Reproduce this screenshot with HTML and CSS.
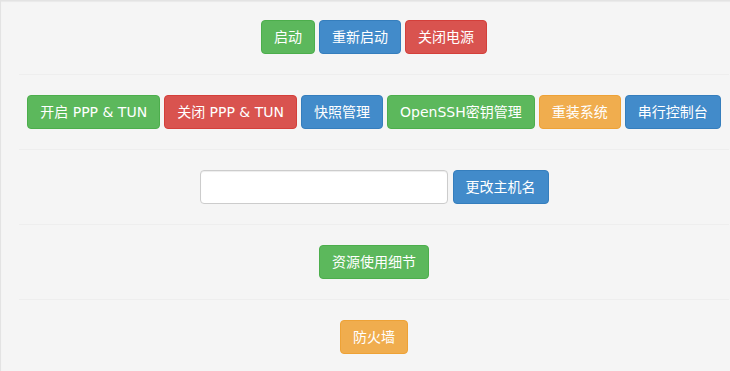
FILE: index.html
```html
<!DOCTYPE html>
<html lang="zh-CN">
<head>
    <meta charset="UTF-8">
    <meta name="viewport" content="width=device-width, initial-scale=1.0">
    <title>服务器管理</title>
    <link rel="stylesheet" href="styles.css">
</head>
<body>
    <div class="well">
        <div class="row">
            <button class="btn btn-success">启动</button>
            <button class="btn btn-primary">重新启动</button>
            <button class="btn btn-danger">关闭电源</button>
        </div>
        <hr>
        <div class="row">
            <button class="btn btn-success">开启 PPP &amp; TUN</button>
            <button class="btn btn-danger">关闭 PPP &amp; TUN</button>
            <button class="btn btn-primary">快照管理</button>
            <button class="btn btn-success">OpenSSH密钥管理</button>
            <button class="btn btn-warning">重装系统</button>
            <button class="btn btn-primary">串行控制台</button>
        </div>
        <hr>
        <div class="row row-form">
            <input type="text" class="form-control">
            <button class="btn btn-primary">更改主机名</button>
        </div>
        <hr>
        <div class="row">
            <button class="btn btn-success">资源使用细节</button>
        </div>
        <hr>
        <div class="row">
            <button class="btn btn-warning">防火墙</button>
        </div>
    </div>
</body>
</html>
```

FILE: styles.css
```css
*
{
    box-sizing: border-box;
}
html
{
    overflow: hidden;
}
body
{
    margin: 0;
    font-family: "DejaVu Sans", "Noto Sans CJK SC", sans-serif;
    font-size: 14px;
    line-height: 20px;
    color: #333;
    background: #fff;
}
.well
{
    width: 748px;
    min-height: 371px;
    padding: 19px 18px;
    background-color: #f5f5f5;
    border: 1px solid #e3e3e3;
    box-shadow: inset 0 1px 1px rgba(0, 0, 0, .05);
}
.row
{
    display: flex;
    justify-content: center;
    gap: 4px;
}
.row-form
{
    gap: 5px;
}
hr
{
    margin: 20px 0;
    border: 0;
    border-top: 1px solid #eee;
}
.btn
{
    display: inline-block;
    height: 34px;
    padding: 6px 12px;
    font-family: inherit;
    font-size: 14px;
    line-height: 20px;
    color: #fff;
    white-space: nowrap;
    border: 1px solid transparent;
    border-radius: 4px;
    cursor: pointer;
}
.btn-success
{
    background-color: #5cb85c;
    border-color: #4cae4c;
}
.btn-primary
{
    background-color: #428bca;
    border-color: #357ebd;
}
.btn-danger
{
    background-color: #d9534f;
    border-color: #d43f3a;
}
.btn-warning
{
    background-color: #f0ad4e;
    border-color: #eea236;
}
.form-control
{
    width: 248px;
    height: 34px;
    padding: 6px 12px;
    font-family: inherit;
    font-size: 14px;
    background: #fff;
    border: 1px solid #ccc;
    border-radius: 4px;
    box-shadow: inset 0 1px 1px rgba(0, 0, 0, .075);
}
```
